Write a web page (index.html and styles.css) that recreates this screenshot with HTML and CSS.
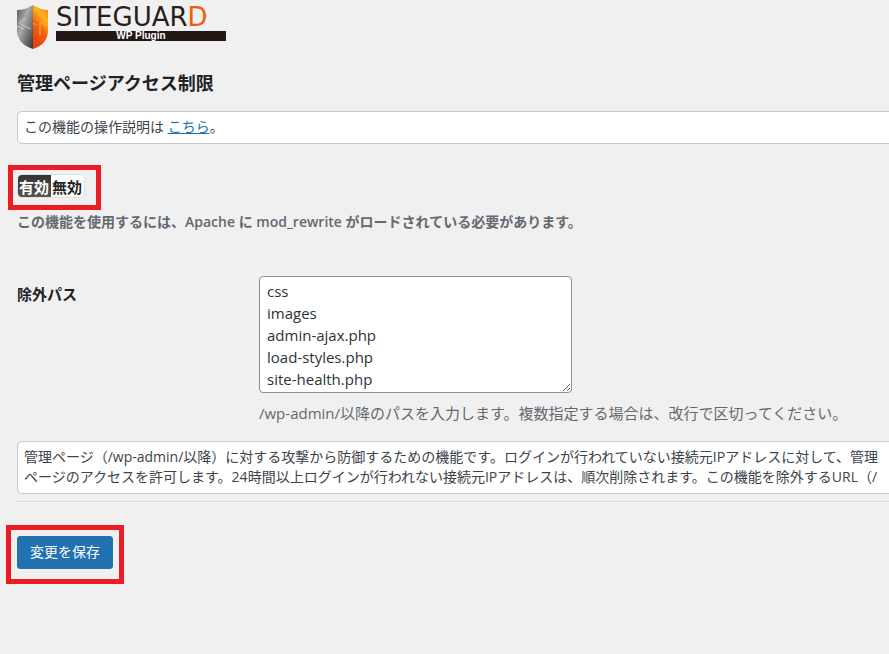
FILE: index.html
```html
<!DOCTYPE html>
<html lang="ja">
<head>
    <meta charset="UTF-8">
    <meta name="viewport" content="width=device-width, initial-scale=1.0">
    <title>管理ページアクセス制限</title>
    <link rel="stylesheet" href="styles.css">
</head>
<body>
    <div class="wrap">
        <div class="logo">
            <svg class="shield" width="32" height="46" viewBox="0 0 32 46">
                <defs>
                    <linearGradient id="silver" x1="0" y1="0" x2="1" y2="1">
                        <stop offset="0" stop-color="#555"/>
                        <stop offset="0.4" stop-color="#aaa"/>
                        <stop offset="1" stop-color="#333"/>
                    </linearGradient>
                    <linearGradient id="fire" x1="1" y1="0" x2="0.6" y2="1">
                        <stop offset="0" stop-color="#f07a10"/>
                        <stop offset="0.35" stop-color="#fcb418"/>
                        <stop offset="0.65" stop-color="#f4600c"/>
                        <stop offset="1" stop-color="#e8440c"/>
                    </linearGradient>
                </defs>
                <path d="M16 1C11 4 6 6 0 6V28C1 37 7 42 16 45Z" fill="url(#silver)"/>
                <path d="M16 1C21 4 26 6 31 6V28C30 37 25 42 16 45Z" fill="url(#fire)"/>
                <path d="M9 14L3 18V20L14 25M0 22L7 25" fill="none" stroke="#ccc" stroke-width="1"/>
                <path d="M16 19L19 21M31 22L23 18V31" fill="none" stroke="#fbb060" stroke-width="1"/>
            </svg>
            <div class="logo_text">
                <div class="logo_name">SITEGUAR<span>D</span></div>
                <div class="logo_sub">WP Plugin</div>
            </div>
        </div>
        <h1>管理ページアクセス制限</h1>
        <div class="notice">この機能の操作説明は <a href="#">こちら</a>。</div>
        <form>
            <div class="mark mark_switch">
                <div class="switch">
                    <input type="radio" name="enable" id="enable_on" value="1" checked>
                    <label for="enable_on">有効</label>
                    <input type="radio" name="enable" id="enable_off" value="0">
                    <label for="enable_off">無効</label>
                </div>
            </div>
            <p class="require">この機能を使用するには、Apache に mod_rewrite がロードされている必要があります。</p>
            <div class="row">
                <label class="row_title" for="exclude">除外パス</label>
                <div class="row_body">
                    <textarea id="exclude" rows="5">css
images
admin-ajax.php
load-styles.php
site-health.php</textarea>
                    <p class="hint">/wp-admin/以降のパスを入力します。複数指定する場合は、改行で区切ってください。</p>
                </div>
            </div>
            <div class="notice">
                管理ページ（/wp-admin/以降）に対する攻撃から防御するための機能です。ログインが行われていない接続元IPアドレスに対して、管理<br>
                ページのアクセスを許可します。24時間以上ログインが行われない接続元IPアドレスは、順次削除されます。この機能を除外するURL（/
            </div>
            <hr>
            <div class="mark mark_save">
                <button type="submit">変更を保存</button>
            </div>
        </form>
    </div>
</body>
</html>
```
FILE: styles.css
```css
*{
    box-sizing: border-box;
}
body{
    margin: 0;
    background-color: #f0f0f0;
    color: #1d2327;
    font-family: "Open Sans", "Noto Sans CJK JP", sans-serif;
    font-size: 14px;
    line-height: 20px;
    overflow-x: hidden;
}
.wrap{
    padding: 4px 0 24px 17px;
}
.logo{
    display: flex;
    height: 46px;
}
.logo_text{
    width: 170px;
    margin-left: 7px;
}
.logo_name{
    font-family: "DejaVu Sans", sans-serif;
    font-size: 26px;
    line-height: 27px;
    color: #2b1d1a;
}
.logo_name span{
    color: #f05a14;
}
.logo_sub{
    height: 10px;
    background-color: #231815;
    color: #fff;
    font-family: "Liberation Sans", sans-serif;
    font-size: 10px;
    font-weight: bold;
    line-height: 10px;
    text-align: center;
}
h1{
    margin: 19px 0 14px;
    font-size: 18px;
    font-weight: 600;
    line-height: 28px;
}
.notice{
    margin-right: -8px;
    padding: 5px 6px 6px;
    background-color: #fff;
    border: 1px solid #c8c9cb;
    border-radius: 5px;
    color: #3c434a;
    white-space: nowrap;
}
a{
    color: #2271b1;
}
.mark{
    width: fit-content;
    border: 5px solid #ed1c24;
}
.mark_switch{
    margin: 21px 0 0 -9px;
    padding: 4px 11px 7px 4px;
}
.switch{
    display: flex;
    height: 24px;
    border: 1px solid #e0e0e0;
    border-radius: 5px;
    background-color: #fff;
    overflow: hidden;
}
.switch input{
    position: absolute;
    opacity: 0;
}
.switch label{
    padding: 0 2px 0 1px;
    font-size: 15px;
    font-weight: 600;
    line-height: 24px;
}
.switch input:checked + label{
    background: linear-gradient(#333, #555);
    color: #fff;
}
.require{
    margin: 2px 0 44px;
    color: #646970;
    font-weight: 600;
}
.row{
    display: flex;
}
.row_title{
    width: 242px;
    padding-top: 8px;
    font-size: 15px;
    font-weight: 600;
}
textarea{
    display: block;
    width: 313px;
    padding: 3px 7px 2px;
    border: 1px solid #8c8f94;
    border-radius: 4px;
    background-color: #fff;
    color: #2c3338;
    font-family: inherit;
    font-size: 15px;
    line-height: 22px;
}
.hint{
    margin: 10px 0 18px;
    color: #646970;
    font-size: 15px;
    white-space: nowrap;
}
hr{
    margin: 7px 0 0;
    border: 0;
    border-top: 1px solid #dcdcde;
    border-bottom: 1px solid #f6f7f7;
}
.mark_save{
    margin: 22px 0 0 -11px;
    padding: 6px 6px 10px;
}
button{
    display: block;
    height: 33px;
    padding: 0 12px 3px;
    border: 1px solid #2271b1;
    border-radius: 3px;
    background-color: #2271b1;
    color: #fff;
    font-family: inherit;
    font-size: 14px;
}
```
